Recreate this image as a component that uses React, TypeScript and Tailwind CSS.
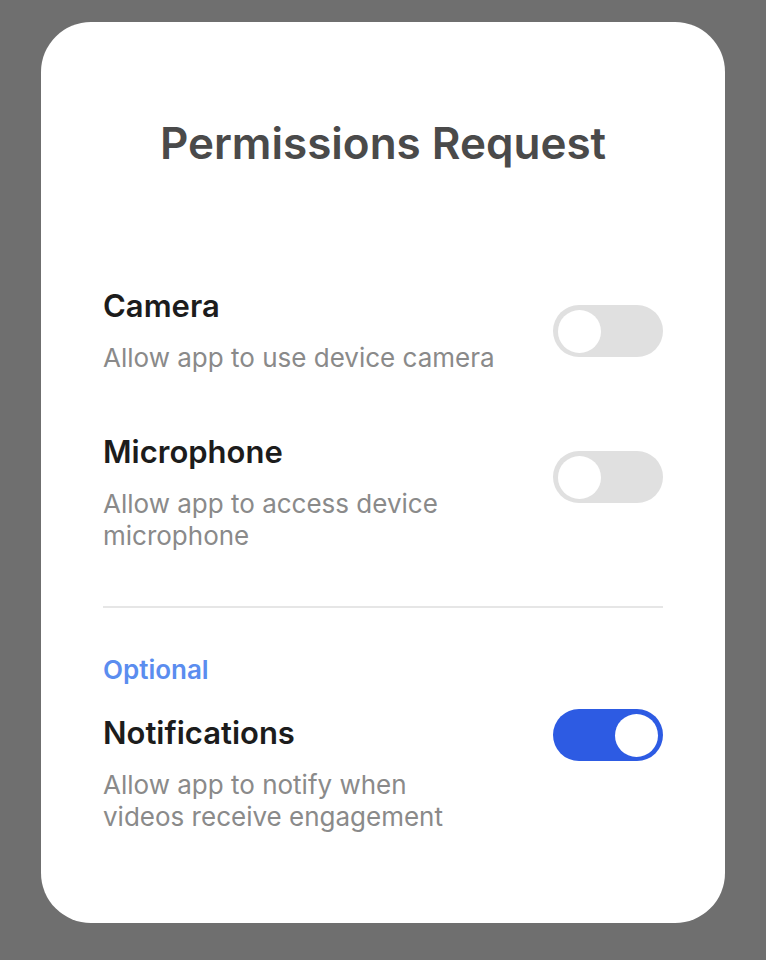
import { useState } from 'react'

type Perm = {
  key: string
  title: string
  desc: string
  descWidth: string
  toggleTop: string
}

const required: Perm[] = [
  { key: 'camera', title: 'Camera', desc: 'Allow app to use device camera', descWidth: 'max-w-none', toggleTop: 'mt-[19px]' },
  { key: 'mic', title: 'Microphone', desc: 'Allow app to access device microphone', descWidth: 'max-w-[350px]', toggleTop: 'mt-[19px]' },
]

function Toggle({ on, onChange }: { on: boolean; onChange: () => void }) {
  return (
    <button
      type="button"
      onClick={onChange}
      className={`flex h-[52px] w-[110px] shrink-0 items-center rounded-full px-[5px] transition-colors ${
        on ? 'justify-end bg-[#2d5be3]' : 'justify-start bg-[#e0e0e0]'
      }`}
    >
      <span className="h-[43px] w-[43px] rounded-full bg-white" />
    </button>
  )
}

function Row({ perm, on, onChange }: { perm: Perm; on: boolean; onChange: () => void }) {
  return (
    <div className="flex items-start justify-between">
      <div>
        <h2 className="text-[31px] font-semibold leading-[40px] text-[#1c1c1c]">{perm.title}</h2>
        <p className={`mt-4 text-[26px] leading-[32px] text-[#8a8a8a] ${perm.descWidth}`}>{perm.desc}</p>
      </div>
      <div className={perm.toggleTop}>
        <Toggle on={on} onChange={onChange} />
      </div>
    </div>
  )
}

export default function App() {
  const [state, setState] = useState<Record<string, boolean>>({
    camera: false,
    mic: false,
    notifications: true,
  })

  const flip = (k: string) => setState((s) => ({ ...s, [k]: !s[k] }))

  const notif: Perm = {
    key: 'notifications',
    title: 'Notifications',
    desc: 'Allow app to notify when videos receive engagement',
    descWidth: 'max-w-[350px]',
    toggleTop: '-mt-1',
  }

  return (
    <div
      className="min-h-screen bg-[#6f6f6f] px-[41px] pt-[22px] pb-[38px]"
      style={{ fontFamily: 'Inter, "Noto Sans", sans-serif' }}
    >
      <div className="rounded-[50px] bg-white px-[62px] pt-[119px] pb-[90px]">
        <h1 className="-mt-[22px] text-center text-[44px] font-semibold leading-[48px] text-[#4a4a4a]">
          Permissions Request
        </h1>

        <div className="mt-[119px] flex flex-col gap-[58px]">
          {required.map((p) => (
            <Row key={p.key} perm={p} on={state[p.key]} onChange={() => flip(p.key)} />
          ))}
        </div>

        <div className="mt-[54px] h-[2px] bg-[#e6e6e6]" />

        <p className="mt-[47px] text-[26px] font-semibold leading-[30px] text-[#5b8def]">Optional</p>

        <div className="mt-[28px]">
          <Row perm={notif} on={state.notifications} onChange={() => flip('notifications')} />
        </div>
      </div>
    </div>
  )
}
